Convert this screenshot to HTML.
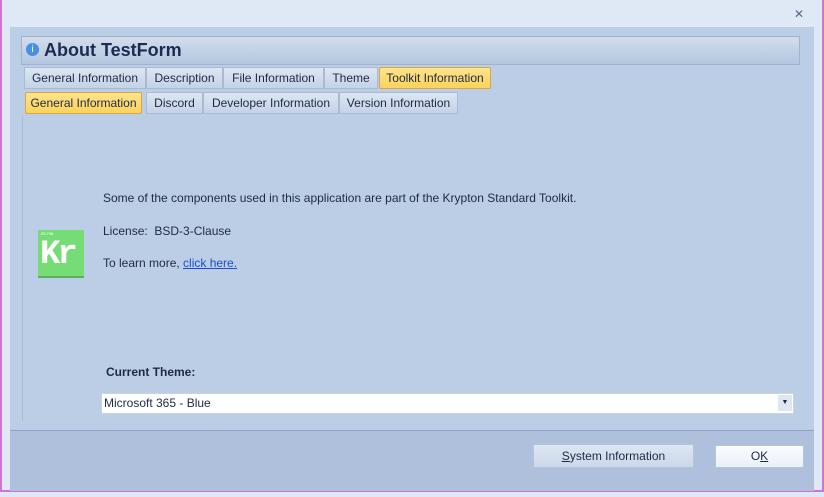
<!DOCTYPE html><html><head><style>
body{margin:0;width:824px;height:497px;background:#dfe9f5;position:relative;overflow:hidden;font-family:"Liberation Sans",sans-serif;font-size:12px;color:#1e2a44}
.a{position:absolute;white-space:nowrap}
.tab{position:absolute;height:22px;line-height:21px;padding:0;text-align:center;white-space:nowrap;border:1px solid #a9bad3;background:linear-gradient(#dde6f2,#c5d3e7);color:#1e2a44;box-sizing:border-box;font-size:12px;overflow:hidden}
.sel{background:linear-gradient(#ffe38a,#fbd35c);border-color:#d4a84a;border-radius:2px}
</style></head><body>
<div class="a" style="left:0;top:0;width:2px;height:492px;background:#d070d8"></div>
<div class="a" style="left:822px;top:0;width:2px;height:492px;background:#d070d8"></div>
<div class="a" style="left:0;top:490px;width:824px;height:2px;background:#d070d8"></div>
<div class="a" style="left:794px;top:7px;font-size:12px;color:#5a6490">✕</div>
<div class="a" style="left:10px;top:27px;width:804px;height:404px;background:#bccde6"></div>
<div class="a" style="left:10px;top:430px;width:804px;height:60px;background:#aec0dc;border-top:1px solid #8ea3c3"></div>
<div class="a" style="left:21px;top:36px;width:779px;height:29px;box-sizing:border-box;border:1px solid #9fb2cf;background:linear-gradient(#d3ddeb,#b4c6e0)"></div>
<div class="a" style="left:26px;top:43px;width:13px;height:13px;border-radius:50%;background:#4a8fe0;color:#fff;font-size:10px;text-align:center;line-height:13px">i</div>
<div class="a" style="left:44px;top:40px;font-size:18px;font-weight:bold;color:#1e2a50">About TestForm</div>
<div class="a" style="left:22px;top:116px;width:1px;height:305px;background:#a9bad3"></div>
<div class="tab" style="left:24px;top:67px;width:122px">General Information</div>
<div class="tab" style="left:146px;top:67px;width:77px">Description</div>
<div class="tab" style="left:223px;top:67px;width:101px">File Information</div>
<div class="tab" style="left:324px;top:67px;width:54px">Theme</div>
<div class="tab sel" style="left:379px;top:67px;width:112px">Toolkit Information</div>
<div class="tab sel" style="left:25px;top:92px;width:117px">General Information</div>
<div class="tab" style="left:146px;top:92px;width:57px">Discord</div>
<div class="tab" style="left:203px;top:92px;width:136px">Developer Information</div>
<div class="tab" style="left:339px;top:92px;width:119px">Version Information</div>
<div class="a" style="left:103px;top:191px">Some of the components used in this application are part of the Krypton Standard Toolkit.</div>
<div class="a" style="left:103px;top:224px">License:&nbsp; BSD-3-Clause</div>
<div class="a" style="left:103px;top:256px">To learn more, <span style="color:#1a4fd0;text-decoration:underline">click here.</span></div>
<div class="a" style="left:38px;top:230px;width:46px;height:46px;background:#76dc76;border-bottom:2px solid #5cb05c"><div style="position:absolute;left:2px;top:8px;font-family:'Liberation Mono',monospace;font-size:34px;line-height:34px;color:#fff;font-weight:bold;letter-spacing:-3px">Kr</div><div style="position:absolute;left:3px;top:1px;font-size:4px;color:#fff">83.798</div></div>
<div class="a" style="left:106px;top:365px;font-weight:bold">Current Theme:</div>
<div class="a" style="left:101px;top:393px;width:693px;height:21px;background:#fff;border:1px solid #c7d3e4;box-sizing:border-box;line-height:19px;padding-left:2px">Microsoft 365 - Blue</div>
<div class="a" style="left:778px;top:395px;width:14px;height:16px;background:#dde6f2;font-size:7px;text-align:center;line-height:16px">▼</div>
<div class="a" style="left:533px;top:444px;width:161px;height:24px;box-sizing:border-box;border:1px solid #b6c4d8;background:linear-gradient(#dde6f2,#cbd8ea);text-align:center;line-height:22px"><u>S</u>ystem Information</div>
<div class="a" style="left:715px;top:445px;width:89px;height:23px;box-sizing:border-box;border:1px solid #b6c4d8;background:linear-gradient(#fbfcfe,#eaf0f8);text-align:center;line-height:21px">O<u>K</u></div>
</body></html>
